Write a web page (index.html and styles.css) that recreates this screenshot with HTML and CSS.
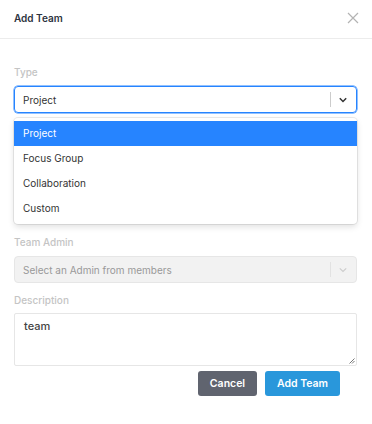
FILE: index.html
```html
<!DOCTYPE html>
<html>
<head>
<meta charset="utf-8">
<link rel="stylesheet" href="styles.css">
</head>
<body>
<div class="modal">
  <div class="header">
    <div class="title">Add Team</div>
    <svg class="close" width="12" height="12" viewBox="0 0 12 12"><path d="M1 1L11 11M11 1L1 11" stroke="#b3b3b3" stroke-width="1.2" fill="none"/></svg>
  </div>
  <div class="body">
    <div class="label">Type</div>
    <div class="select-wrap">
      <div class="select focused">
        <span class="value">Project</span>
        <span class="sep"></span>
        <svg class="chev" width="8" height="8" viewBox="0 0 8 8"><path d="M0.8 2.3L4 5.5L7.2 2.3" stroke="#333" stroke-width="1.5" fill="none"/></svg>
      </div>
      <div class="menu">
        <div class="opt active">Project</div>
        <div class="opt">Focus Group</div>
        <div class="opt">Collaboration</div>
        <div class="opt">Custom</div>
      </div>
    </div>
    <div class="label admin-label">Team Admin</div>
    <div class="select disabled">
      <span class="value">Select an Admin from members</span>
      <span class="sep"></span>
      <svg class="chev" width="8" height="8" viewBox="0 0 8 8"><path d="M0.8 2.3L4 5.5L7.2 2.3" stroke="#ccc" stroke-width="1.1" fill="none"/></svg>
    </div>
    <div class="label desc-label">Description</div>
    <div class="textarea">team<svg class="grip" width="6" height="6" viewBox="0 0 6 6"><path d="M5.5 0.5L0.5 5.5M5.5 3L3 5.5" stroke="#555" stroke-width="0.8"/></svg></div>
    <div class="footer">
      <button class="btn cancel">Cancel</button>
      <button class="btn add">Add Team</button>
    </div>
  </div>
</div>
</body>
</html>
```
FILE: styles.css
```css
* { box-sizing: border-box; }
html, body { margin: 0; padding: 0; background: #fff; }
body { font-family: Inter, "Noto Sans", sans-serif; color: #333; width: 372px; height: 424px; overflow: hidden; }
.header {
  height: 39px;
  border-bottom: 1px solid #ececec;
  display: flex;
  align-items: center;
  justify-content: space-between;
  padding: 0 13px 2px 14px;
}
.title { font-size: 10px; font-weight: 600; color: #2d3340; }
.body { padding: 27px 15px 0 14px; }
.label { font-size: 10px; color: #c4c4c4; font-weight: 500; height: 13px; line-height: 13px; }
.select-wrap { position: relative; margin-top: 7px; }
.select {
  height: 27px;
  border-radius: 4px;
  display: flex;
  align-items: center;
  padding-left: 8px;
  font-size: 10px;
}
.select .value { flex: 1; }
.select .sep { width: 1px; height: 15px; background: #ccc; }
.select .chev { margin: 0 9px 0 8px; }
.focused { border: 1px solid #2684ff; box-shadow: 0 0 0 0.5px #2684ff; color: #333; }
.disabled { background: #f2f2f2; border: 1px solid #e6e6e6; color: #999; height: 27px; margin-top: 7px; }
.disabled .sep { background: #e2e2e2; }
.menu {
  position: absolute;
  left: 0; right: 0;
  top: 32px;
  background: #fff;
  border-radius: 4px;
  box-shadow: 0 0 0 1px rgba(0,0,0,0.08), 0 3px 6px rgba(0,0,0,0.12);
  padding: 3px 0 3px;
  z-index: 2;
}
.opt { height: 25px; line-height: 25px; padding-left: 9px; font-size: 10px; color: #333; }
.opt.active { background: #2684ff; color: #fff; }
.admin-label { margin-top: 123px; }
.desc-label { margin-top: 11px; }
.textarea {
  position: relative;
  margin-top: 6px;
  height: 53px;
  border: 1px solid #e6e6e6;
  border-radius: 2px;
  padding: 5px 9px;
  font-size: 11px;
  font-weight: 500;
  color: #444;
}
.grip { position: absolute; right: 1px; bottom: 1px; }
.footer { display: flex; justify-content: flex-end; gap: 8px; margin-top: 5px; padding-right: 17px; }
.btn {
  border: none;
  border-radius: 3px;
  height: 25px;
  color: #fff;
  font-family: Inter, sans-serif;
  font-size: 10.5px;
  font-weight: 600;
  padding: 0;
}
.cancel { width: 59px; background: #60646f; }
.add { width: 75px; background: #2997db; }
```
